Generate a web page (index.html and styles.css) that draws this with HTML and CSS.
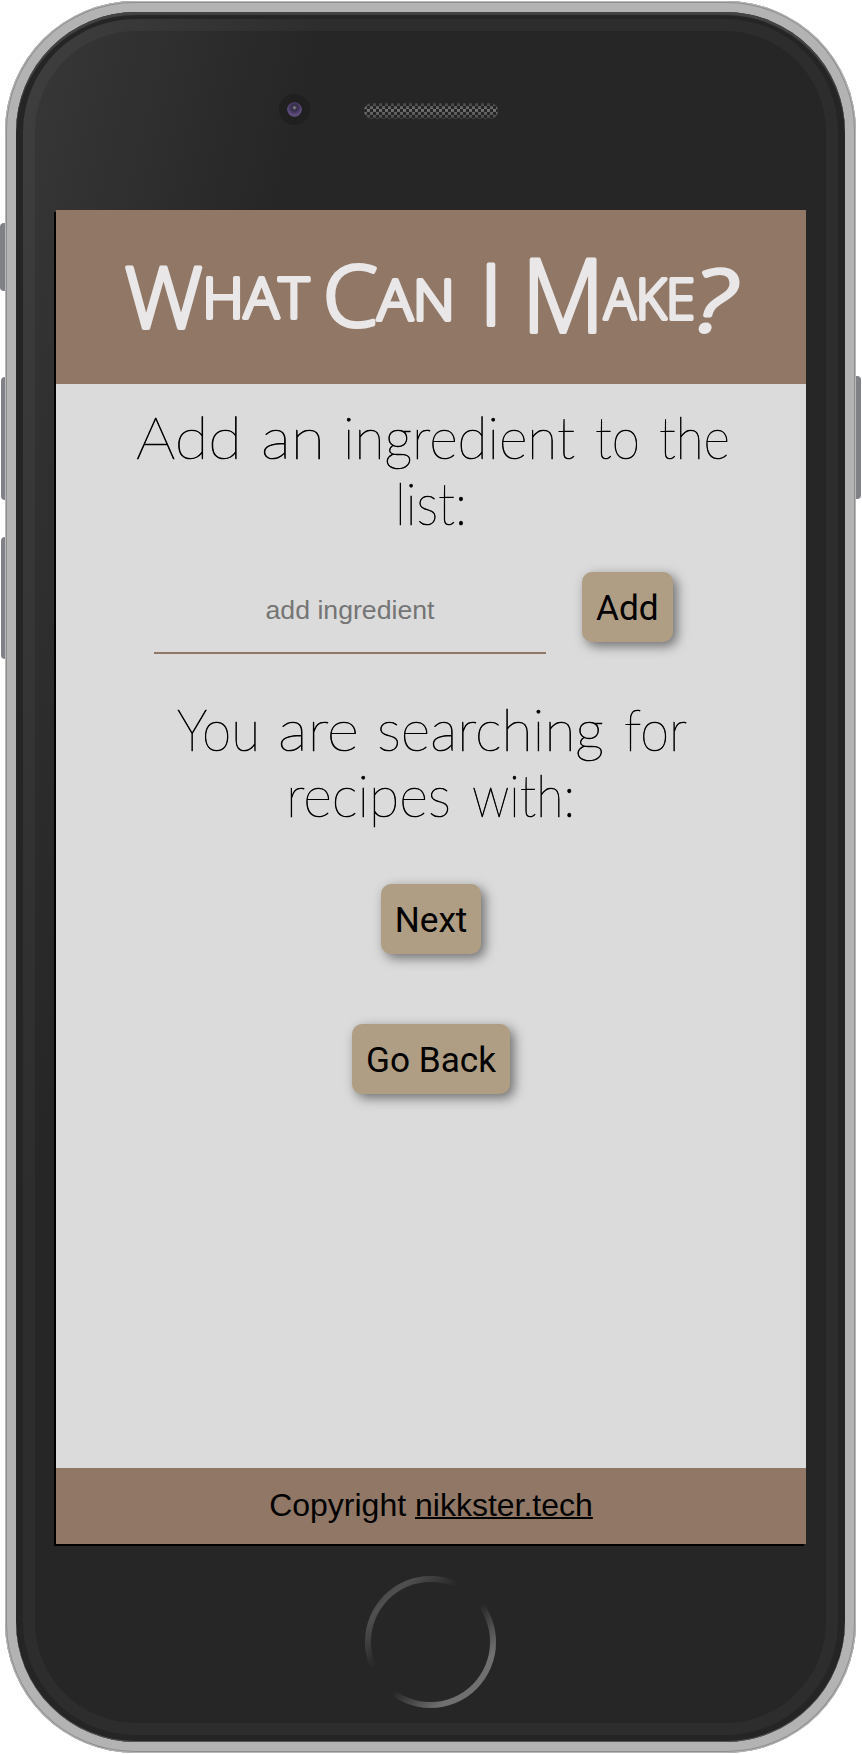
FILE: index.html
```
<!DOCTYPE html>
<html lang="en">
<head>
<meta charset="utf-8">
<title>What Can I Make?</title>
<link rel="stylesheet" href="styles.css">
</head>
<body>
<div class="phone">
  <span class="key key-mute"></span>
  <span class="key key-up"></span>
  <span class="key key-down"></span>
  <span class="key key-power"></span>
  <div class="body">
    <div class="rim">
      <div class="glass">
        <div class="top-bar">
          <span class="camera"></span>
          <svg class="speaker" width="134" height="16" viewBox="0 0 134 16">
            <defs>
              <linearGradient id="fade" x1="0" y1="0" x2="0" y2="1"><stop offset="0" stop-color="#3a3a3a"/><stop offset=".4" stop-color="#747474"/><stop offset="1" stop-color="#404040"/></linearGradient>
              <pattern id="mesh" width="6" height="6" patternUnits="userSpaceOnUse"><path d="M0 0h3v3h-3zM3 3h3v3h-3z" fill="#252525"/></pattern>
            </defs>
            <rect width="134" height="16" rx="8" fill="url(#fade)"/>
            <rect width="134" height="16" rx="8" fill="url(#mesh)"/>
          </svg>
        </div>
        <div class="screen">
          <header class="header">
            <h1 class="title">
              <svg class="lettering" width="750" height="174" viewBox="56 210 750 174">
                <text x="125" y="328" textLength="184" lengthAdjust="spacingAndGlyphs">W<tspan class="small" dy="-10">hat</tspan></text>
                <text x="323" y="326" textLength="132" lengthAdjust="spacingAndGlyphs">C<tspan class="small" dy="-6">an</tspan></text>
                <text x="480" y="325" textLength="22" lengthAdjust="spacingAndGlyphs">I</text>
                <text x="522" y="332" textLength="173" lengthAdjust="spacingAndGlyphs"><tspan class="tall">M</tspan><tspan class="small" dy="-13">ake</tspan></text>
                <text class="mark" x="693" y="331" textLength="42" lengthAdjust="spacingAndGlyphs">?</text>
              </svg>
            </h1>
          </header>
          <main class="main">
            <h2 class="heading">
              <svg class="copy" width="750" height="132" viewBox="56 403 750 132">
                <text x="136" y="458" textLength="106" lengthAdjust="spacingAndGlyphs">Add</text>
                <text x="261" y="458" textLength="64" lengthAdjust="spacingAndGlyphs">an</text>
                <text x="343" y="458" textLength="232" lengthAdjust="spacingAndGlyphs">ingredient</text>
                <text x="595" y="458" textLength="45" lengthAdjust="spacingAndGlyphs">to</text>
                <text x="659" y="458" textLength="71" lengthAdjust="spacingAndGlyphs">the</text>
                <text x="395" y="524" textLength="72" lengthAdjust="spacingAndGlyphs">list:</text>
              </svg>
            </h2>
            <form class="form">
              <input class="input" type="text" placeholder="add ingredient">
              <button class="button" type="button">Add</button>
            </form>
            <h2 class="heading">
              <svg class="copy" width="750" height="132" viewBox="56 695 750 132">
                <text x="177" y="750" textLength="83" lengthAdjust="spacingAndGlyphs">You</text>
                <text x="278" y="750" textLength="81" lengthAdjust="spacingAndGlyphs">are</text>
                <text x="377" y="750" textLength="227" lengthAdjust="spacingAndGlyphs">searching</text>
                <text x="624" y="750" textLength="63" lengthAdjust="spacingAndGlyphs">for</text>
                <text x="286" y="816" textLength="165" lengthAdjust="spacingAndGlyphs">recipes</text>
                <text x="472" y="816" textLength="103" lengthAdjust="spacingAndGlyphs">with:</text>
              </svg>
            </h2>
            <div class="actions">
              <button class="button" type="button">Next</button>
              <button class="button" type="button">Go Back</button>
            </div>
          </main>
          <footer class="footer">Copyright&nbsp;<a class="link" href="#">nikkster.tech</a></footer>
        </div>
        <div class="bottom-bar"><span class="home"></span></div>
      </div>
    </div>
  </div>
</div>
</body>
</html>
```

FILE: styles.css
```
* { box-sizing: border-box; }
body { margin: 0; background: #fff; }
.phone { position: relative; width: 862px; height: 1754px; padding: 1px 6px 1px 5px; overflow: hidden; }
.key { position: absolute; background: #808187; }
.key-mute, .key-up, .key-down { left: 1px; width: 6px; border-radius: 4px 0 0 4px; }
.key-mute { left: 0; top: 223px; height: 68px; }
.key-up { top: 377px; height: 123px; }
.key-down { top: 537px; height: 122px; }
.key-power { right: 1px; top: 376px; width: 8px; height: 123px; border-radius: 0 4px 4px 0; }
.body {
  position: relative; height: 1752px; padding: 11px; border-radius: 130px;
  background: #b3b3b3;
  box-shadow: inset 0 0 0 1px #b8b8b8, inset 0 0 0 2px #8e8e8e;
}
.rim { height: 1730px; padding: 7px; border-radius: 120px; background: #252525; box-shadow: inset 0 3px 1px #444, inset 0 -1px 0 #555; }
.glass {
  height: 1716px; border: 12px solid rgba(255,255,255,.035); border-radius: 113px;
  background: linear-gradient(104deg, #383838 0, #262626 290px) border-box;
  padding: 0 21px;
}
.top-bar { position: relative; height: 179px; }
.camera {
  position: absolute; left: 223px; top: 63px; width: 31px; height: 31px; border: 8px solid #202021; border-radius: 50%;
  background: radial-gradient(circle at 50% 38%, #aaa 0, #696575 8%, #302e3d 22%, #43345e 36%, #5c4d7b 60%) padding-box;
}
.speaker { position: absolute; left: 308px; top: 72px; }
.screen { display: flex; flex-direction: column; width: 750px; height: 1334px; background: #dbdbdb; box-shadow: -2px 2px 0 #000; }
.header { height: 174px; background: #917866; }
.title, .heading { margin: 0; font-weight: 400; font-size: 16px; }
.lettering, .copy { display: block; overflow: visible; }
.lettering text {
  font-family: "Open Sans", sans-serif; font-weight: 300; font-size: 84px; text-transform: uppercase;
  fill: #eae7e8; stroke: #eae7e8; stroke-width: 4px; stroke-linejoin: round;
}
.lettering .small { font-size: 56px; }
.lettering .tall { font-size: 102px; }
.lettering .mark { font-style: italic; }
.copy text { font-family: Lato, sans-serif; font-size: 57px; font-weight: 100; fill: #000; stroke: #000; stroke-width: .7px; }
.main { flex: 1; padding-top: 20px; }
.form { display: flex; margin: 36px 0 42px; padding-left: 98px; gap: 36px; height: 82px; }
.input {
  width: 392px; height: 82px; padding: 0 0 4px; border: 0; border-bottom: 2px solid #917866; background: transparent;
  font-family: "Liberation Sans", Arial, sans-serif; font-size: 26.67px; text-align: center; outline: none;
}
.input::placeholder { color: #757575; }
.button {
  height: 70px; padding: 2px 14px 0; border: 0; border-radius: 10px; background: #af9e83; color: #000;
  font-family: Roboto, sans-serif; font-size: 35.2px; white-space: nowrap;
  box-shadow: 4px 4px 12px rgba(0,0,0,.5);
}
.actions { display: flex; flex-direction: column; align-items: center; gap: 70px; padding-top: 56px; }
.footer { display: flex; justify-content: center; height: 76px; line-height: 74px; background: #917866; font-family: "Liberation Sans", Arial, sans-serif; font-size: 32px; color: #000; }
.link { color: #000; text-decoration: underline; text-decoration-thickness: 2px; }
.bottom-bar { padding: 32px 0 0 309px; }
.home {
  display: block; width: 131px; height: 132px; border-radius: 50%;
  background: linear-gradient(135deg, #3a3a3a 5%, #505050 18%, #262626 38%, #262626 55%, #707070 78%);
  padding: 6px;
}
.home::before { content: ""; display: block; width: 119px; height: 120px; border-radius: 50%; background: #262626; }
```
